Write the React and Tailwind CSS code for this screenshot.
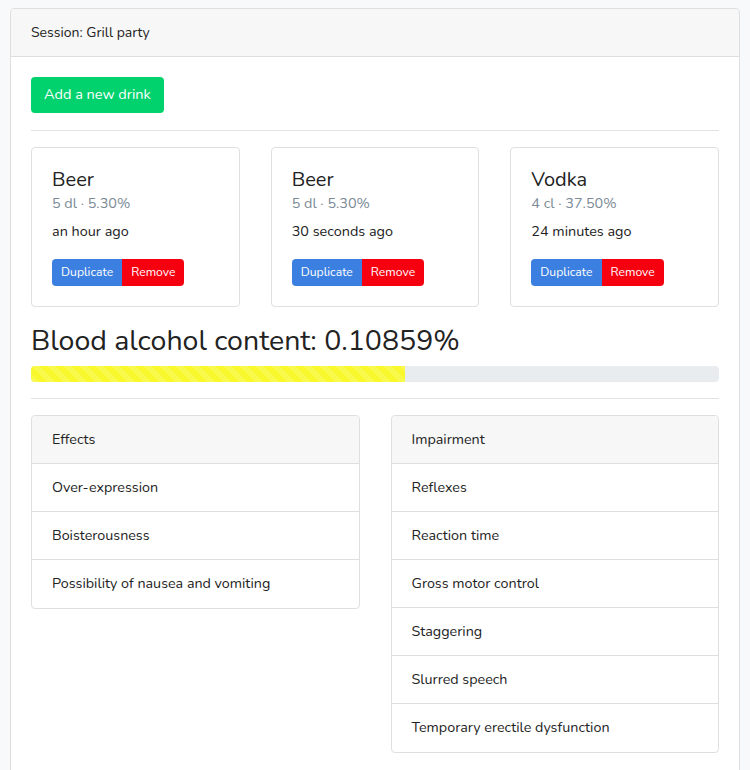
import React from 'react';

const drinks = [
  { name: 'Beer', amount: '5 dl', abv: '5.30%', when: 'an hour ago' },
  { name: 'Beer', amount: '5 dl', abv: '5.30%', when: '30 seconds ago' },
  { name: 'Vodka', amount: '4 cl', abv: '37.50%', when: '24 minutes ago' },
];

const effects = ['Over-expression', 'Boisterousness', 'Possibility of nausea and vomiting'];
const impairment = [
  'Reflexes',
  'Reaction time',
  'Gross motor control',
  'Staggering',
  'Slurred speech',
  'Temporary erectile dysfunction',
];

const bac = 0.10859;

function DrinkCard({ drink }) {
  return (
    <div className="border border-[#dfdfdf] rounded-[4px] bg-white px-5 pt-5 pb-5">
      <div className="text-[20px] leading-[23px] text-[#222]">{drink.name}</div>
      <div className="mt-px text-[14.4px] leading-[22px] text-[#7b8a96]">
        {drink.amount} · {drink.abv}
      </div>
      <div className="mt-[6px] text-[14.4px] leading-[22px] text-[#222]">{drink.when}</div>
      <div className="mt-[17px] flex">
        <button className="h-[27px] px-[9px] text-[12.2px] text-white bg-[#3b80e0] rounded-l-[4px]">Duplicate</button>
        <button className="h-[27px] px-[9px] text-[12.2px] text-white bg-[#f60010] rounded-r-[4px]">Remove</button>
      </div>
    </div>
  );
}

function ListGroup({ title, items }) {
  return (
    <div className="border border-[#dfdfdf] rounded-[4px] bg-white text-[14.3px] text-[#222]">
      <div className="h-[48px] flex items-center px-5 bg-[#f7f7f7] border-b border-[#dfdfdf] rounded-t-[4px]">{title}</div>
      {items.map((item, i) => (
        <div
          key={item}
          className={`h-[48px] flex items-center px-5 ${i < items.length - 1 ? 'border-b border-[#dfdfdf]' : ''}`}
        >
          {item}
        </div>
      ))}
    </div>
  );
}

export default function App() {
  return (
    <div className="min-h-screen bg-[#f8f9fa] px-[10px] pt-[8px] font-['Nunito','Lato','Noto_Sans',sans-serif]">
      <div className="border border-[#dfdfdf] rounded-[4px] bg-white">
        <div className="h-[48px] flex items-center px-5 bg-[#f7f7f7] border-b border-[#dfdfdf] rounded-t-[4px] text-[14px] text-[#222]">
          Session: Grill party
        </div>
        <div className="p-5">
          <button className="h-[36px] px-[13px] rounded-[4px] bg-[#02d26e] text-white text-[14.5px]">Add a new drink</button>
          <hr className="mt-[17px] mb-4 border-[#e3e3e3]" />
          <div className="grid grid-cols-3 gap-[31px]">
            {drinks.map((d, i) => (
              <DrinkCard key={i} drink={d} />
            ))}
          </div>
          <h3 className="mt-4 mb-2 text-[28.5px] leading-[35px] text-[#222]">Blood alcohol content: {bac}%</h3>
          <div className="h-[16px] rounded-[4px] bg-[#e9ecef] overflow-hidden">
            <div
              className="h-full bg-[#f8f82c] bg-[linear-gradient(45deg,rgba(255,255,255,.15)_25%,transparent_25%,transparent_50%,rgba(255,255,255,.15)_50%,rgba(255,255,255,.15)_75%,transparent_75%,transparent)] bg-[length:1rem_1rem]"
              style={{ width: `${(bac / 0.2) * 100}%` }}
            />
          </div>
          <hr className="my-4 border-[#e3e3e3]" />
          <div className="grid grid-cols-2 gap-[31px] items-start">
            <ListGroup title="Effects" items={effects} />
            <ListGroup title="Impairment" items={impairment} />
          </div>
        </div>
      </div>
    </div>
  );
}
